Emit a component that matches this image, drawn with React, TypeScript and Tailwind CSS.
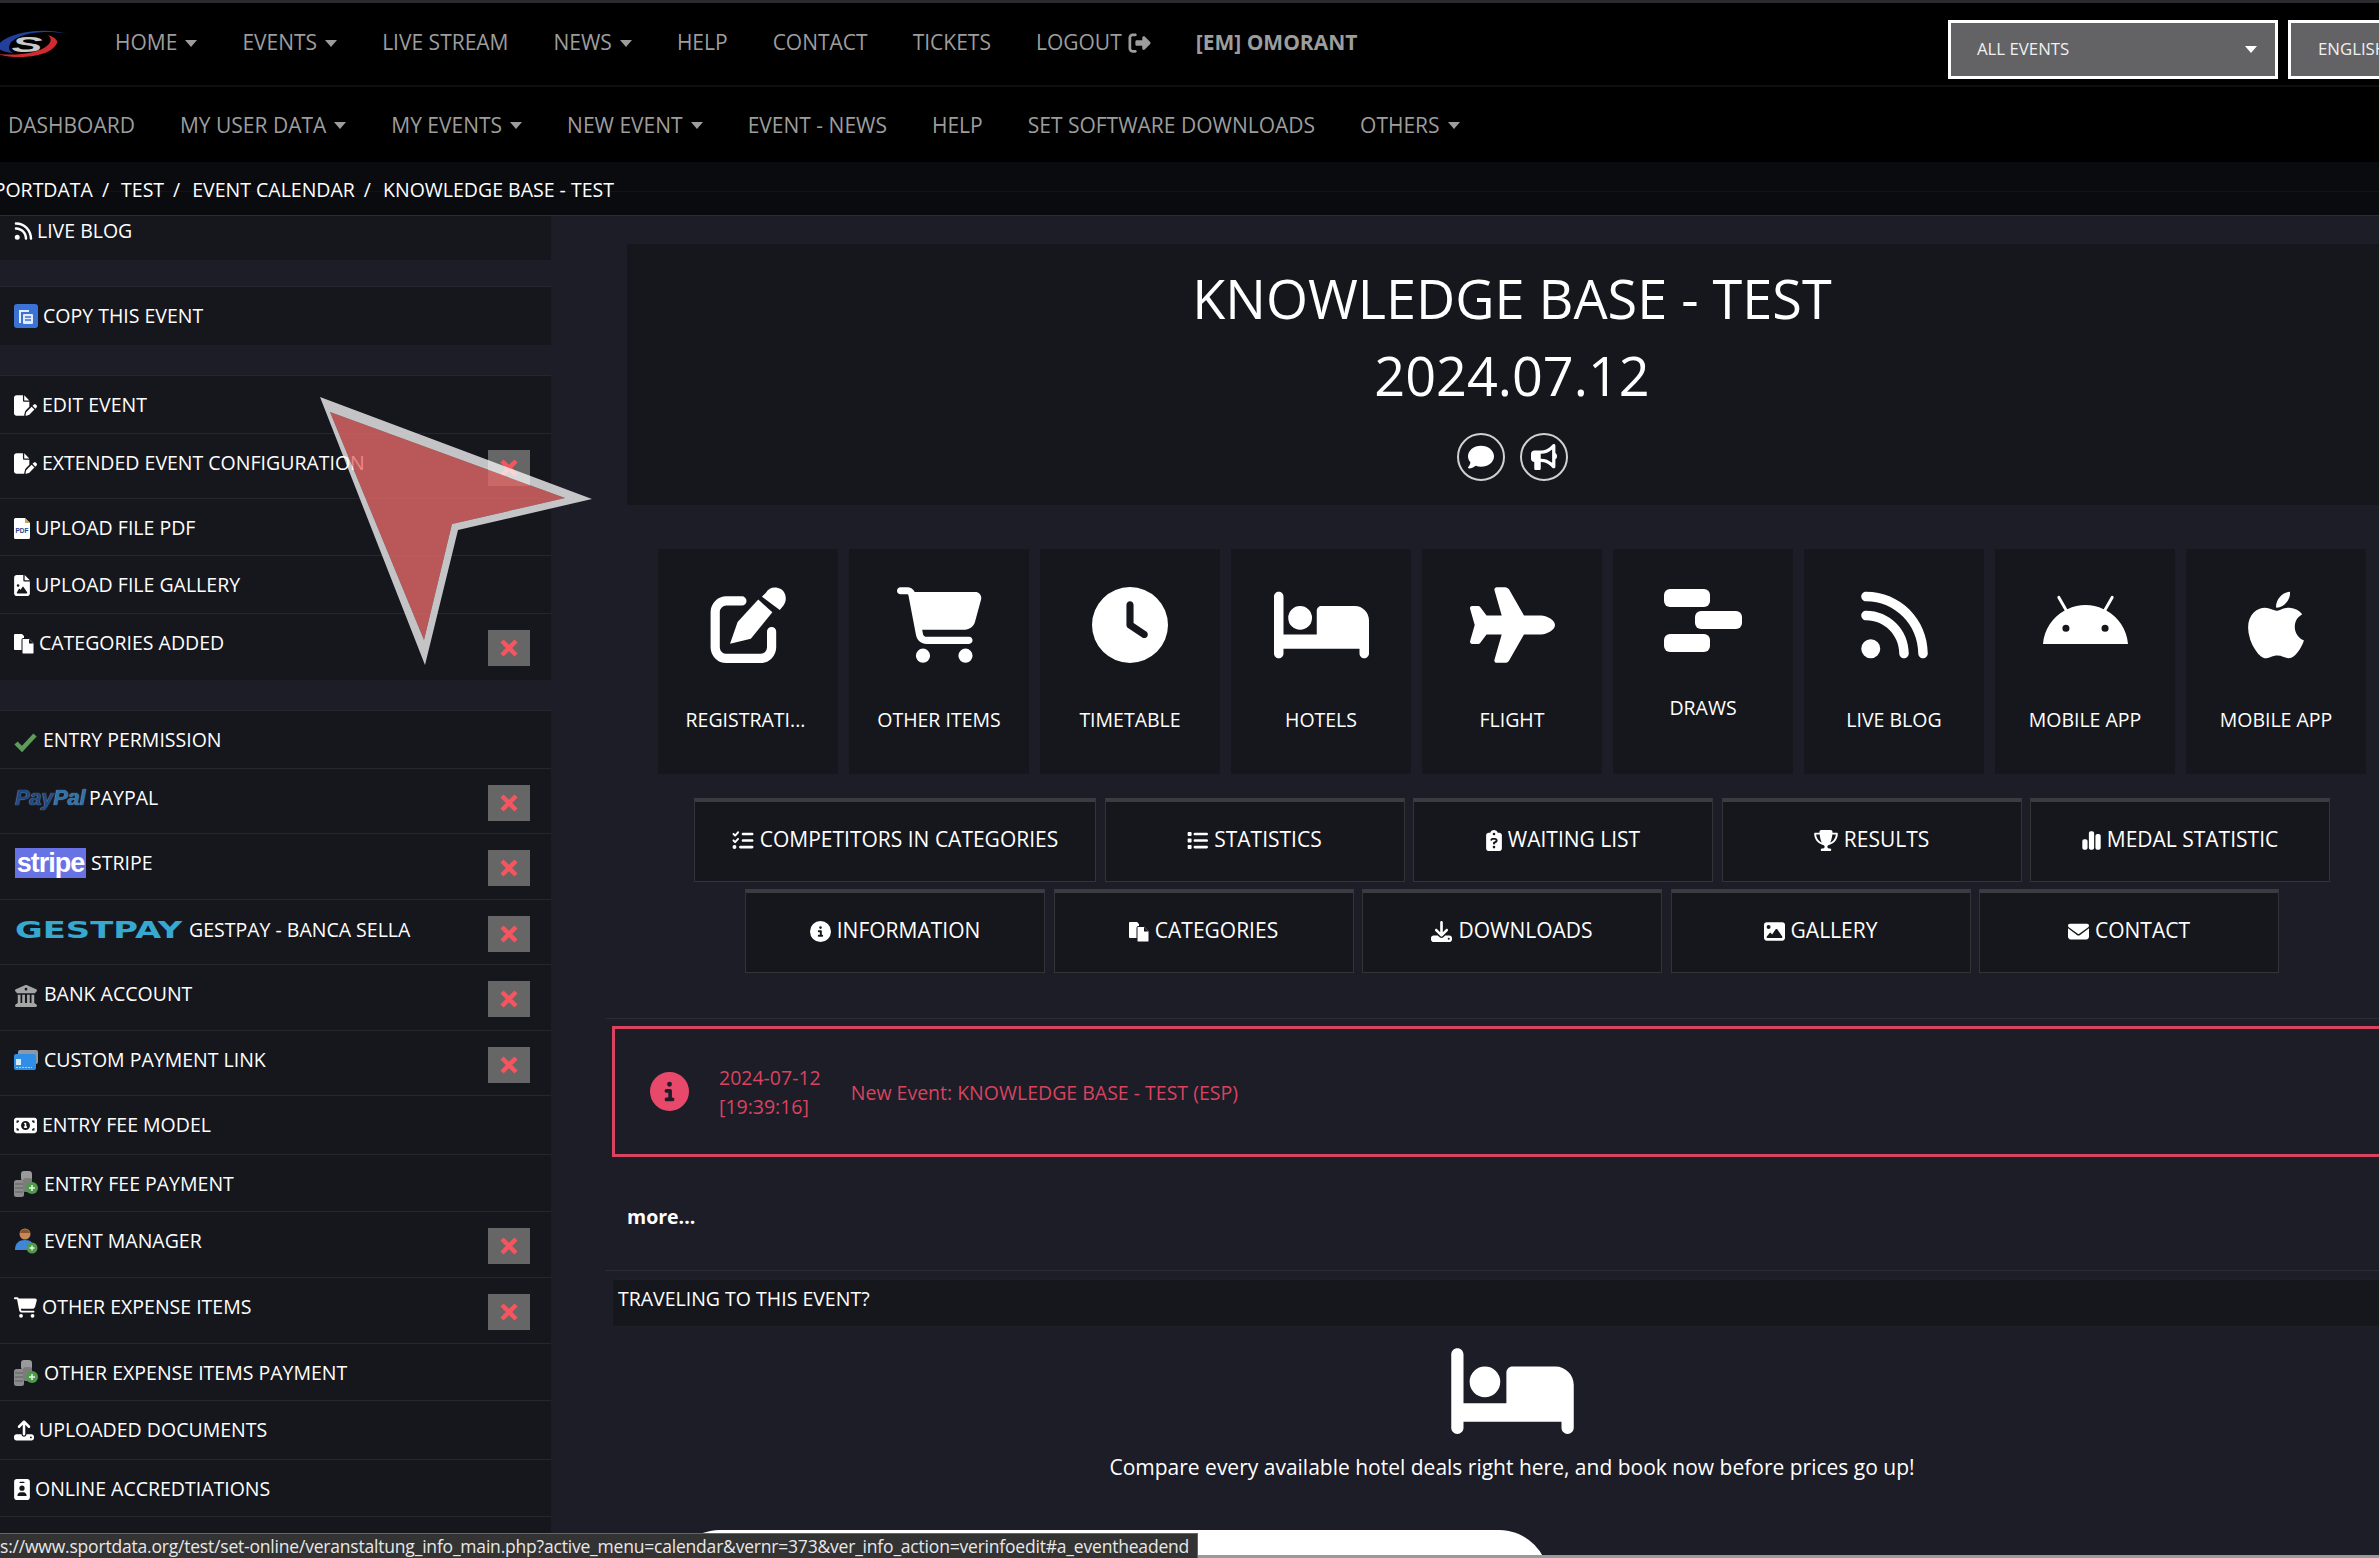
import type { ReactNode } from "react";
import {
  FaAndroid, FaApple, FaRightFromBracket, FaBed, FaBuildingColumns, FaBullhorn, FaCartShopping, FaChartSimple,
  FaCircleInfo, FaClipboardQuestion, FaClock, FaComment, FaDownload, FaEnvelope, FaFileImage,
  FaFilePen, FaIdBadge, FaImage, FaList, FaListCheck, FaMoneyBill1, FaPlane, FaRss,
  FaTrophy, FaUpload,
} from "react-icons/fa6";

function Caret({ className = "border-t-[#9d9d9d]" }: { className?: string }) {
  return <span className={`inline-block w-0 h-0 border-x-[6px] border-t-[7px] border-x-transparent ${className}`} />;
}

function NavItem({ label, caret, bold }: { label: string; caret?: boolean; bold?: boolean }) {
  return (
    <span className={`flex items-center gap-[8px] whitespace-nowrap ${bold ? "font-bold" : ""}`}>
      {label}
      {caret && <Caret />}
    </span>
  );
}

function Logo() {
  return (
    <svg viewBox="0 0 70 32" className="w-[70px] h-[32px] shrink-0 -ml-[2px]">
      <path d="M0 17C8 6 40 -2 70 6C44 1 18 6 12 16C10 20 11 23 15 25C5 24 -2 21 0 17Z" fill="#233f9c" />
      <path d="M0 26C14 31 52 31 59 15C60 12 56 9 50 7C54 11 53 14 50 17C42 25 20 28 0 26Z" fill="#d12b30" />
      <text x="29" y="24" textAnchor="middle" textLength="31" lengthAdjust="spacingAndGlyphs" fontSize="22" fontWeight="700" fontStyle="italic" fill="#c9c9c9" fontFamily="Liberation Sans, sans-serif">S</text>
    </svg>
  );
}

function CopyIcon() {
  return (
    <svg viewBox="0 0 24 24" className="w-[24px] h-[24px] shrink-0">
      <rect width="24" height="24" rx="3" fill="#3b72d6" />
      <path d="M5 19V6h10v2H7v11Z" fill="#e4ecfb" />
      <rect x="9" y="10" width="10" height="10" rx="1" fill="#e4ecfb" />
      <path d="M11 13h6M11 16h6" stroke="#3b72d6" strokeWidth="1.4" />
    </svg>
  );
}

function CheckIcon() {
  return (
    <svg viewBox="0 0 23 20" className="mt-[3px] mr-[1px] w-[23px] h-[20px] shrink-0">
      <path d="M2 11l6 6L21 3" fill="none" stroke="#5c9c58" strokeWidth="4.5" />
    </svg>
  );
}

function PdfIcon() {
  return (
    <svg viewBox="0 0 16 21" className="w-[16px] h-[21px] shrink-0">
      <path d="M1.5 0H11l5 5v14.500a1.500 1.500 0 0 1-1.500 1.500h-13A1.500 1.500 0 0 1 0 19.500v-18A1.500 1.500 0 0 1 1.500 0Z" fill="#fff" />
      <path d="M11 0v5h5Z" fill="#c9a25a" />
      <text x="8" y="15" textAnchor="middle" fontSize="6.5" fontWeight="700" fill="#23458c" fontFamily="Liberation Sans, sans-serif">PDF</text>
    </svg>
  );
}

function SheetsIcon({ className }: { className: string }) {
  return (
    <svg viewBox="0 0 20 21" className={`${className} shrink-0`}>
      <path d="M1 1h7l2 2v14H1a1 1 0 0 1-1-1V2a1 1 0 0 1 1-1Z" fill="#fff" />
      <path d="M9 5.500h6l5 5V20a1 1 0 0 1-1 1H9a1 1 0 0 1-1-1V6.500a1 1 0 0 1 1-1Z" fill="#fff" stroke="#16171d" strokeWidth="1" />
      <path d="M15 6v4.500h4.500Z" fill="#16171d" />
    </svg>
  );
}

function CardIcon() {
  return (
    <svg viewBox="0 0 24 20" className="mr-[1px] w-[24px] h-[20px] shrink-0">
      <rect x="4" y="0" width="20" height="14" rx="2" fill="#8d97a6" />
      <rect x="0" y="4" width="22" height="16" rx="2" fill="#2f8fe6" />
      <rect x="2" y="9" width="5" height="6" fill="#d5e9fb" />
      <path d="M2 17.500h16" stroke="#a6d2f7" strokeWidth="1" strokeDasharray="2 1" />
    </svg>
  );
}

function CoinsIcon() {
  return (
    <svg viewBox="0 0 24 26" className="mr-[1px] w-[24px] h-[26px] shrink-0">
      <rect x="7" y="0" width="11" height="10" rx="3" fill="#9a9a9a" />
      <rect x="0" y="9" width="10" height="17" rx="2.5" fill="#8c8c8c" />
      <path d="M1 13h8M1 17h8M1 21h8" stroke="#5f5f5f" strokeWidth="1" />
      <rect x="9" y="7" width="9" height="14" rx="2.5" fill="#7c7c7c" />
      <circle cx="18" cy="17" r="6" fill="#4e9a4a" />
      <path d="M18 14v6M15 17h6" stroke="#e8f3e7" strokeWidth="1.5" />
    </svg>
  );
}

function ManagerIcon() {
  return (
    <svg viewBox="0 0 24 26" className="mr-[1px] w-[24px] h-[26px] shrink-0">
      <circle cx="11" cy="6" r="5.5" fill="#c98758" />
      <path d="M6 5C7 0 15 0 16 5Z" fill="#8a5428" />
      <path d="M1 22c0-7 4-10 10-10s9 3 9 10Z" fill="#3f86d8" />
      <circle cx="18" cy="20" r="5.5" fill="#4e9a4a" />
      <path d="M18 17.500v5M15.500 20h5" stroke="#e8f3e7" strokeWidth="1.4" />
    </svg>
  );
}

function DrawsIcon() {
  return (
    <svg viewBox="0 0 78 63" className="w-[78px] h-[63px]">
      <rect x="0" y="0" width="46" height="18" rx="6" fill="#fff" />
      <rect x="31" y="22" width="47" height="18" rx="6" fill="#fff" />
      <rect x="0" y="45" width="46" height="18" rx="6" fill="#fff" />
    </svg>
  );
}

function PenIcon() {
  return (
    <svg viewBox="0 0 512 512" className="h-[76px] w-[76px]">
      <path d="M215 94H110a75 75 0 0 0-75 75V406a75 75 0 0 0 75 75H340a75 75 0 0 0 75-75V300" fill="none" stroke="#fff" strokeWidth="62" strokeLinecap="round" />
      <path d="M135 382L186 236L325 85L420 170L275 348Z" fill="#fff" />
      <path d="M375 40C400 0 440 -5 480 15C515 40 520 90 495 125L470 155L350 65Z" fill="#fff" />
    </svg>
  );
}

function DeleteBox() {
  return (
    <span className="mt-[2px] flex h-[36px] w-[42px] shrink-0 items-center justify-center bg-[#666666]">
      <svg viewBox="0 0 20 20" className="h-[20px] w-[20px]">
        <path d="M3 3L17 17M17 3L3 17" stroke="#f4555e" strokeWidth="4.5" />
      </svg>
    </span>
  );
}

type Row = { h: string; label: string; icon: ReactNode; del?: boolean; gapBefore?: string };

const rows: Row[] = [
  { h: "h-[44px]", label: "LIVE BLOG", icon: <FaRss className="-mr-[1px] h-[20px] w-[19px] shrink-0" /> },
  { h: "h-[59px]", label: "COPY THIS EVENT", gapBefore: "h-[26px]", icon: <CopyIcon /> },
  { h: "h-[58px]", label: "EDIT EVENT", gapBefore: "h-[30px]", icon: <FaFilePen className="h-[21px] w-[23px] shrink-0" /> },
  { h: "h-[65px]", label: "EXTENDED EVENT CONFIGURATION", del: true, icon: <FaFilePen className="h-[21px] w-[23px] shrink-0" /> },
  { h: "h-[57px]", label: "UPLOAD FILE PDF", icon: <PdfIcon /> },
  { h: "h-[58px]", label: "UPLOAD FILE GALLERY", icon: <FaFileImage className="h-[21px] w-[16px] shrink-0" /> },
  { h: "h-[67px]", label: "CATEGORIES ADDED", del: true, icon: <SheetsIcon className="h-[21px] w-[20px]" /> },
  { h: "h-[58px]", label: "ENTRY PERMISSION", gapBefore: "h-[30px]", icon: <CheckIcon /> },
  {
    h: "h-[65px]", label: "PAYPAL", del: true,
    icon: (
      <span className="ml-[1px] w-[69px] shrink-0 font-['Liberation_Sans',sans-serif] text-[22px] font-bold italic leading-[30px] tracking-[-0.3px] [text-shadow:0_0_1px_#a9bdd4]">
        <span className="text-[#1d4a82]">Pay</span>
        <span className="text-[#2d73a8]">Pal</span>
      </span>
    ),
  },
  {
    h: "h-[66px]", label: "STRIPE", del: true,
    icon: <span className="ml-[1px] flex h-[30px] w-[71px] shrink-0 items-center justify-center bg-[#6772e5] font-['Liberation_Sans',sans-serif] text-[27px] font-bold tracking-[-1px] text-white">stripe</span>,
  },
  {
    h: "h-[65px]", label: "GESTPAY - BANCA SELLA", del: true,
    icon: (
      <span className="ml-[1px] w-[169px] shrink-0 font-['DejaVu_Sans',sans-serif] text-[23px] font-bold leading-[30px] text-[#37a8d0]">
        <span className="inline-block origin-left scale-x-[1.47] pt-[1px]">GESTPAY</span>
      </span>
    ),
  },
  { h: "h-[66px]", label: "BANK ACCOUNT", del: true, icon: <FaBuildingColumns className="mx-[1px] mt-[3px] mr-[2px] h-[22px] w-[22px] shrink-0 text-[#a5a5a5]" /> },
  { h: "h-[65px]", label: "CUSTOM PAYMENT LINK", del: true, icon: <CardIcon /> },
  { h: "h-[59px]", label: "ENTRY FEE MODEL", icon: <FaMoneyBill1 className="h-[21px] w-[23px] shrink-0" /> },
  { h: "h-[57px]", label: "ENTRY FEE PAYMENT", icon: <CoinsIcon /> },
  { h: "h-[66px]", label: "EVENT MANAGER", del: true, icon: <ManagerIcon /> },
  { h: "h-[66px]", label: "OTHER EXPENSE ITEMS", del: true, icon: <FaCartShopping className="h-[21px] w-[23px] shrink-0" /> },
  { h: "h-[57px]", label: "OTHER EXPENSE ITEMS PAYMENT", icon: <CoinsIcon /> },
  { h: "h-[59px]", label: "UPLOADED DOCUMENTS", icon: <FaUpload className="h-[21px] w-[20px] shrink-0" /> },
  { h: "h-[57px]", label: "ONLINE ACCREDTIATIONS", icon: <FaIdBadge className="h-[21px] w-[16px] shrink-0" /> },
];

function Sidebar() {
  return (
    <aside className="w-[551px] shrink-0 text-[19.5px] leading-[30px] text-white">
      {rows.map((r, i) => (
        <div key={r.label}>
          {r.gapBefore && <div className={r.gapBefore} />}
          <div className={`flex items-start justify-between bg-[#16171d] pl-[14px] pr-[21px] ${r.h} ${i === 0 ? "pt-0" : "border-t border-[#26272e] pt-[14px]"}`}>
            <span className="flex min-h-[30px] items-center gap-[5px] whitespace-nowrap">
              {r.icon}
              {r.label}
            </span>
            {r.del && <DeleteBox />}
          </div>
        </div>
      ))}
      <div className="h-[60px] border-t border-[#26272e] bg-[#16171d]" />
    </aside>
  );
}

const tiles: { label: string; icon: ReactNode }[] = [
  { label: "OTHER ITEMS", icon: <FaCartShopping className="h-[76px] w-[85px]" /> },
  { label: "TIMETABLE", icon: <FaClock className="h-[76px] w-[76px]" /> },
  { label: "HOTELS", icon: <FaBed className="h-[76px] w-[95px]" /> },
  { label: "FLIGHT", icon: <FaPlane className="h-[76px] w-[85px]" /> },
];

const tilesAfter: { label: string; icon: ReactNode }[] = [
  { label: "LIVE BLOG", icon: <FaRss className="h-[76px] w-[67px]" /> },
  { label: "MOBILE APP", icon: <FaAndroid className="h-[76px] w-[85px]" /> },
  { label: "MOBILE APP", icon: <FaApple className="h-[76px] w-[62px]" /> },
];

function Tile({ label, icon }: { label: string; icon: ReactNode }) {
  return (
    <div className="flex h-[225px] w-[180px] shrink-0 flex-col items-center bg-[#16171d] pt-[38px] text-white">
      <div className="flex h-[76px] items-center justify-center">{icon}</div>
      <div className="mt-[42px] text-[19.5px] leading-[30px]">{label}</div>
    </div>
  );
}

function ActionButton({ w, icon, label }: { w: string; icon: ReactNode; label: string }) {
  return (
    <div className={`flex h-[84px] shrink-0 items-center justify-center gap-[6px] border border-t-[4px] border-[#333338] border-t-[#3c3c40] bg-[#16171d] pb-[3px] text-[21px] text-white ${w}`}>
      {icon}
      {label}
    </div>
  );
}

export default function App() {
  return (
    <div className="relative h-[1558px] w-[2379px] overflow-hidden bg-[#1c1d27] font-['Open_Sans',sans-serif]">
      <div className="h-[3px] bg-[#2a2a2f]" />

      <nav className="flex h-[82px] items-center justify-between bg-black text-[21px] text-[#9d9d9d]">
        <div className="flex items-center">
          <Logo />
          <div className="ml-[47px] flex items-center gap-[45px] pb-[2px]">
            <NavItem label="HOME" caret />
            <NavItem label="EVENTS" caret />
            <NavItem label="LIVE STREAM" />
            <NavItem label="NEWS" caret />
            <NavItem label="HELP" />
            <NavItem label="CONTACT" />
            <NavItem label="TICKETS" />
            <span className="flex items-center gap-[6px]">LOGOUT <FaRightFromBracket className="h-[22px] w-[23px]" /></span>
            <NavItem label="[EM] OMORANT" bold />
          </div>
        </div>
        <div className="mt-[10px] flex w-[431px] shrink-0 gap-[10px] text-[16.8px] text-[#f0f0f0]">
          <div className="flex h-[59px] w-[330px] shrink-0 items-center justify-between border-[3px] border-white bg-[#636366] pl-[26px] pr-[18px]">
            ALL EVENTS
            <Caret className="border-t-white" />
          </div>
          <div className="flex h-[59px] w-[200px] shrink-0 items-center border-[3px] border-white bg-[#636366] pl-[27px]">ENGLISH</div>
        </div>
      </nav>

      <nav className="flex h-[77px] items-center gap-[45px] border-t-2 border-[#0e0e10] bg-black pl-[8px] pt-[2px] text-[21px] text-[#9d9d9d]">
        <NavItem label="DASHBOARD" />
        <NavItem label="MY USER DATA" caret />
        <NavItem label="MY EVENTS" caret />
        <NavItem label="NEW EVENT" caret />
        <NavItem label="EVENT - NEWS" />
        <NavItem label="HELP" />
        <NavItem label="SET SOFTWARE DOWNLOADS" />
        <NavItem label="OTHERS" caret />
      </nav>

      <div className="h-[53px] bg-[#0a0b0e] text-[19.5px] text-white">
        <div className="flex h-[30px] gap-[9px] border-b border-[#121316] pt-[13px] leading-[30px]">
          <span className="-ml-[17px]">SPORTDATA</span><span>/</span>
          <span className="ml-[3px]">TEST</span><span>/</span>
          <span className="ml-[3px]">EVENT CALENDAR</span><span>/</span>
          <span className="ml-[3px]">KNOWLEDGE BASE - TEST</span>
        </div>
      </div>

      <div className="flex border-t border-[#2a2b34]">
        <Sidebar />

        <main className="flex-1">
          <div className="ml-[76px] mt-[28px] flex h-[261px] w-[1770px] flex-col items-center bg-[#16171d] text-white">
            <h1 className="mt-[16px] text-[54px] leading-[76px]">KNOWLEDGE BASE - TEST</h1>
            <div className="mt-[1px] text-[54px] leading-[76px]">2024.07.12</div>
            <div className="mt-[20px] flex gap-[15px]">
              <span className="flex h-[48px] w-[48px] items-center justify-center rounded-full border-2 border-[#d0d0d0]"><FaComment className="h-[26px] w-[26px]" /></span>
              <span className="flex h-[48px] w-[48px] items-center justify-center rounded-full border-2 border-[#d0d0d0]"><FaBullhorn className="h-[26px] w-[26px]" /></span>
            </div>
          </div>

          <div className="ml-[107px] mt-[44px] flex gap-[11px]">
            <div className="flex h-[225px] w-[180px] shrink-0 flex-col items-center bg-[#16171d] pt-[38px] text-white">
              <div className="flex h-[76px] items-center justify-center"><PenIcon /></div>
              <div className="-ml-[5px] mt-[42px] text-[19.5px] leading-[30px]">REGISTRATI...</div>
            </div>
            {tiles.map((t) => <Tile key={t.label} label={t.label} icon={t.icon} />)}
            <div className="flex h-[225px] w-[180px] shrink-0 flex-col items-center bg-[#16171d] pt-[40px] text-white">
              <DrawsIcon />
              <div className="mt-[41px] text-[19.5px] leading-[30px]">DRAWS</div>
            </div>
            {tilesAfter.map((t, i) => <Tile key={i} label={t.label} icon={t.icon} />)}
          </div>

          <div className="ml-[76px] mt-[24px] flex w-[1770px] justify-center gap-[8.5px]">
            <ActionButton w="w-[402px]" icon={<FaListCheck className="h-[21px] w-[22px]" />} label="COMPETITORS IN CATEGORIES" />
            <ActionButton w="w-[300px]" icon={<FaList className="h-[21px] w-[21px]" />} label="STATISTICS" />
            <ActionButton w="w-[300px]" icon={<FaClipboardQuestion className="h-[21px] w-[16px]" />} label="WAITING LIST" />
            <ActionButton w="w-[300px]" icon={<FaTrophy className="h-[21px] w-[24px]" />} label="RESULTS" />
            <ActionButton w="w-[300px]" icon={<FaChartSimple className="h-[21px] w-[19px]" />} label="MEDAL STATISTIC" />
          </div>
          <div className="ml-[76px] mt-[7px] flex w-[1770px] justify-center gap-[8.5px]">
            <ActionButton w="w-[300px]" icon={<FaCircleInfo className="h-[21px] w-[21px]" />} label="INFORMATION" />
            <ActionButton w="w-[300px]" icon={<SheetsIcon className="h-[21px] w-[20px]" />} label="CATEGORIES" />
            <ActionButton w="w-[300px]" icon={<FaDownload className="h-[21px] w-[21px]" />} label="DOWNLOADS" />
            <ActionButton w="w-[300px]" icon={<FaImage className="h-[21px] w-[21px]" />} label="GALLERY" />
            <ActionButton w="w-[300px]" icon={<FaEnvelope className="h-[21px] w-[21px]" />} label="CONTACT" />
          </div>

          <div className="ml-[54px] mt-[45px] h-[8px] w-[1800px] border-t border-[#2a2b34]" />
          <div className="ml-[61px] flex h-[131px] w-[1800px] items-center border-[3px] border-[#d9435f] pl-[35px] text-[19.5px] text-[#d9435f]">
            <FaCircleInfo className="h-[39px] w-[39px] shrink-0 text-[#e8496b]" />
            <div className="ml-[30px] leading-[29px]">2024-07-12<br />[19:39:16]</div>
            <div className="ml-[30px] mt-[3px]">New Event: KNOWLEDGE BASE - TEST (ESP)</div>
          </div>
          <div className="ml-[76px] mt-[45px] text-[19.5px] font-bold leading-[30px] text-white">more...</div>
          <div className="ml-[54px] mt-[38px] h-[9px] w-[1800px] border-t border-[#2a2b34]" />
          <div className="ml-[61px] h-[48px] w-[1800px] border border-[#1f2027] bg-[#16171d] pl-[5px] text-[19.5px] leading-[38px] text-white">TRAVELING TO THIS EVENT?</div>

          <div className="ml-[76px] flex w-[1770px] flex-col items-center text-white">
            <FaBed className="mt-[15px] h-[98px] w-[123px]" />
            <div className="mt-[12px] text-[21px] leading-[30px]">Compare every available hotel deals right here, and book now before prices go up!</div>
          </div>
          <div className="ml-[119px] mt-[48px] h-[60px] w-[879px] rounded-t-[50px] bg-white pl-[550px] pt-[22px] text-[19.5px] text-[#222]">Show all available hotel deals</div>
        </main>
      </div>

      <svg viewBox="0 0 2379 1558" className="pointer-events-none absolute inset-0 h-[1558px] w-[2379px]">
        <polygon points="330,412 565,498 452,524 424,640" fill="rgb(228,104,104)" fillOpacity="0.8" />
        <path d="M320 397L592 499L458 530L425 665ZM330 412L424 640L452 524L565 498Z" fill="#fff" fillOpacity="0.75" fillRule="evenodd" />
      </svg>

      <div className="absolute bottom-0 left-0 h-[3px] w-full bg-[#9a9a9a]" />
      <div className="absolute bottom-0 left-0 h-[25px] whitespace-nowrap border-r border-t border-[#666] bg-[#333333] pr-[8px] text-[17.5px] leading-[24px] tracking-[-0.2px] text-[#e8e8e8]">
        s://www.sportdata.org/test/set-online/veranstaltung_info_main.php?active_menu=calendar&amp;vernr=373&amp;ver_info_action=verinfoedit#a_eventheadend
      </div>
    </div>
  );
}
